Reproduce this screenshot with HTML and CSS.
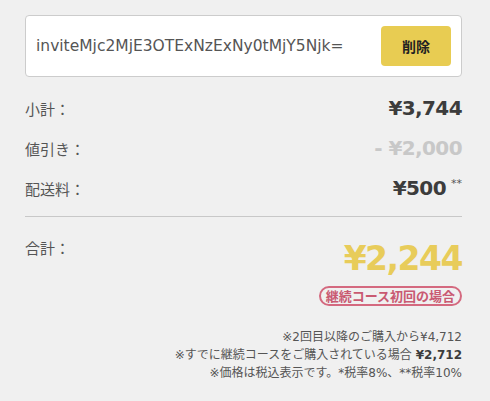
FILE: index.html
```html
<!DOCTYPE html>
<html lang="ja">
	<head>
		<meta charset="utf-8" />
		<link rel="stylesheet" href="styles.css">
	</head>
	<body>
		<section id="summary">
			<div class="coupon">
				<span class="coupon-code">inviteMjc2MjE3OTExNzExNy0tMjY5Njk=</span>
				<button class="coupon-remove" type="button">削除</button>
			</div>
			<div class="rows">
				<div class="row">
					<span class="label">小計：</span>
					<span class="value">¥3,744</span>
				</div>
				<div class="row">
					<span class="label">値引き：</span>
					<span class="value discount">- ¥2,000</span>
				</div>
				<div class="row">
					<span class="label">配送料：</span>
					<span class="value">¥500<sup class="mark">**</sup></span>
				</div>
			</div>
			<hr>
			<div class="total">
				<span class="label">合計：</span>
				<div class="total-side">
					<span class="total-value">¥2,244</span>
					<span class="badge">継続コース初回の場合</span>
				</div>
			</div>
			<footer class="notes">
				<p>※2回目以降のご購入から¥4,712</p>
				<p>※すでに継続コースをご購入されている場合 <b>¥2,712</b></p>
				<p>※価格は税込表示です。*税率8%、**税率10%</p>
			</footer>
		</section>
	</body>
</html>
```

FILE: styles.css
```css
html, body {
	margin: 0;
	padding: 0;
	height: 100%;
	width: 100%;
	overflow: hidden;
}
body {
	font-family: "DejaVu Sans", "Noto Sans CJK JP", sans-serif;
	background-color: #F0F0F0;
	color: #555;
}
#summary {
	box-sizing: border-box;
	padding: 15px 28px 0 25px;
}
.coupon {
	display: flex;
	align-items: center;
	justify-content: space-between;
	box-sizing: border-box;
	height: 62px;
	padding: 0 10px;
	background-color: #fff;
	border: 1px solid #ccc;
	border-radius: 4px;
}
.coupon-code {
	font-size: 15.5px;
	color: #555;
}
.coupon-remove {
	width: 70px;
	height: 40px;
	border: 0;
	border-radius: 4px;
	background-color: #E8CC52;
	color: #222;
	font-family: "Noto Sans CJK JP", sans-serif;
	font-size: 14px;
	font-weight: bold;
}
.rows {
	margin-top: 11px;
}
.row {
	display: flex;
	align-items: center;
	justify-content: space-between;
	height: 40px;
}
.label {
	font-size: 15px;
	color: #555;
}
.value {
	font-size: 20px;
	font-weight: bold;
	letter-spacing: -0.6px;
	color: #3c3c3c;
}
.value.discount {
	color: #c8c8c8;
}
.mark {
	font-size: 11px;
	font-weight: normal;
	color: #555;
	margin-left: 5px;
	letter-spacing: 0;
	vertical-align: 8px;
	line-height: 0;
}
hr {
	margin: 8px 0 0;
	border: 0;
	border-top: 1px solid #c8c8c8;
}
.total {
	display: flex;
	justify-content: space-between;
	align-items: flex-start;
	margin-top: 22px;
}
.total .label {
	line-height: 20px;
}
.total-side {
	display: flex;
	flex-direction: column;
	align-items: flex-end;
}
.total-value {
	font-size: 33px;
	line-height: 40px;
	font-weight: bold;
	letter-spacing: -1.5px;
	color: #E8CC5A;
}
.badge {
	box-sizing: border-box;
	margin-top: 7px;
	height: 20px;
	padding: 0 5px;
	border: 2px solid #D4697F;
	border-radius: 10px;
	font-family: "Noto Sans CJK JP", sans-serif;
	font-size: 13px;
	line-height: 16px;
	font-weight: bold;
	color: #C95A72;
}
.notes {
	margin-top: 22px;
	text-align: right;
	font-size: 12px;
	line-height: 18px;
	color: #555;
}
.notes p {
	margin: 0;
}
.notes b {
	color: #3c3c3c;
}
```
